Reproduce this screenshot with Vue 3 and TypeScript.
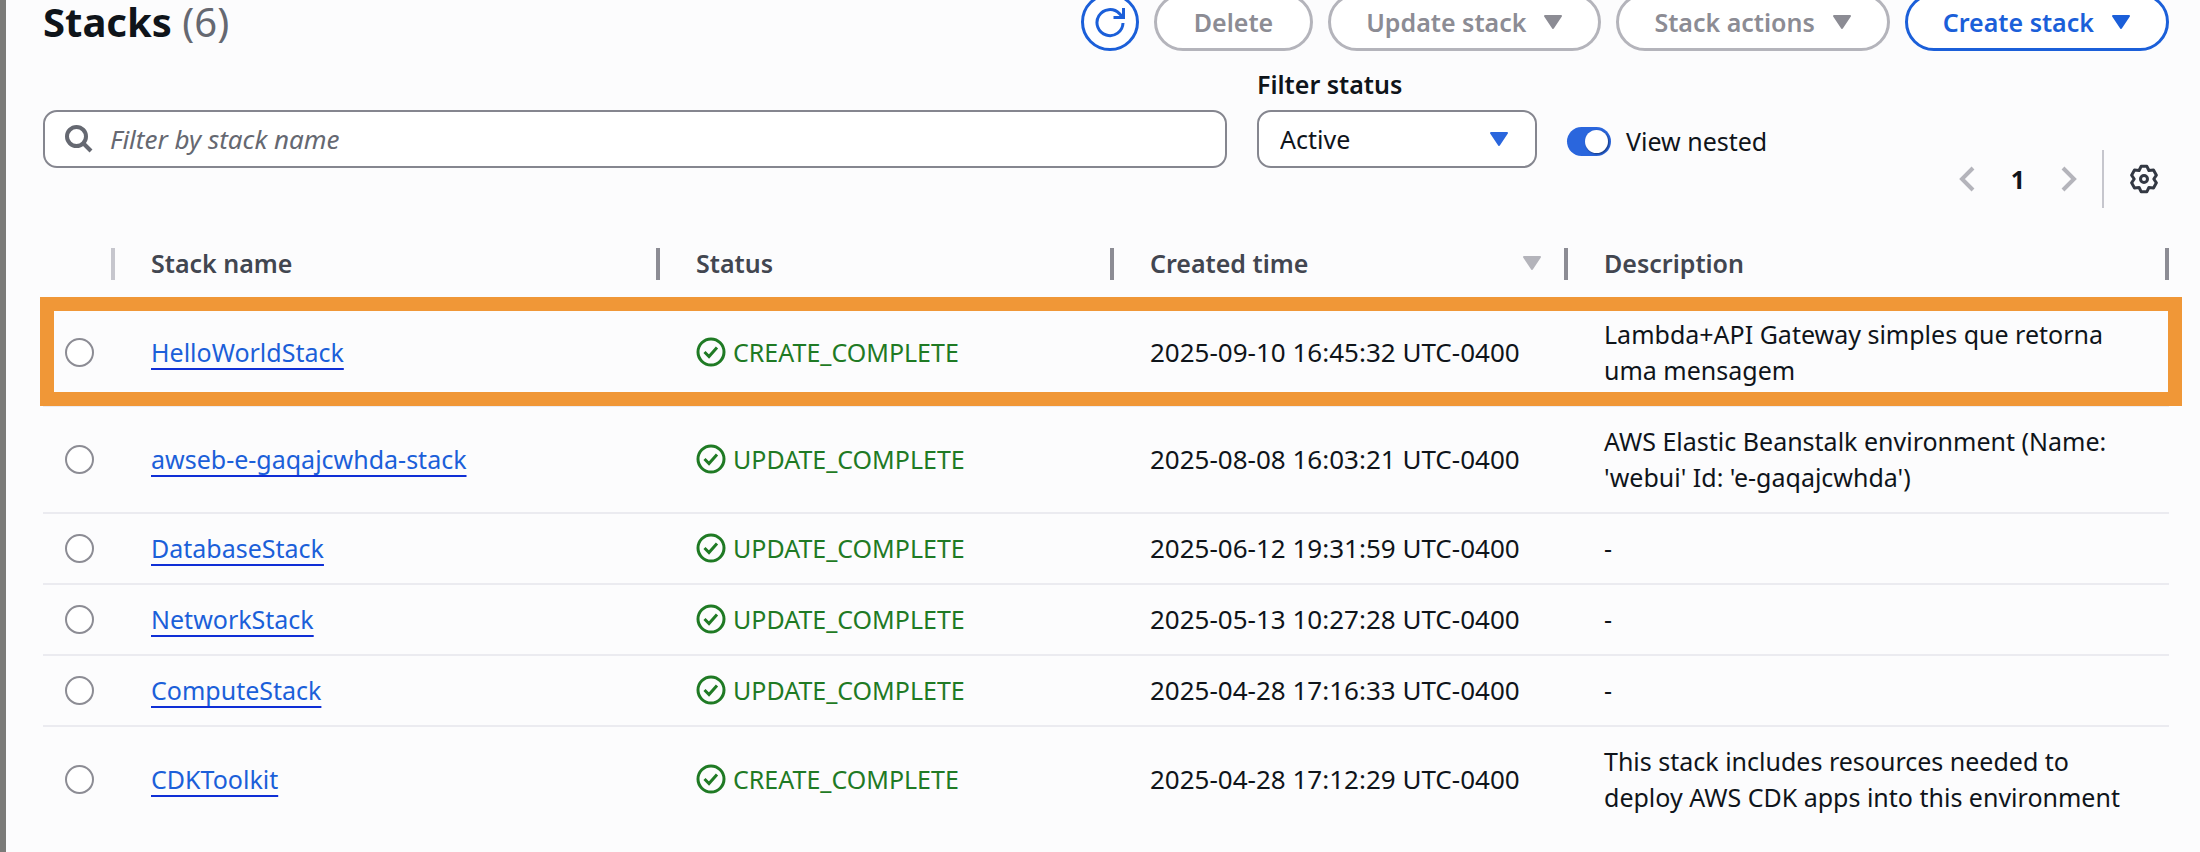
<script setup lang="ts">
import { ref } from 'vue'

interface Stack {
  name: string
  status: string
  created: string
  description: string
}

const stacks: Stack[] = [
  { name: 'HelloWorldStack', status: 'CREATE_COMPLETE', created: '2025-09-10 16:45:32 UTC-0400', description: 'Lambda+API Gateway simples que retorna uma mensagem' },
  { name: 'awseb-e-gaqajcwhda-stack', status: 'UPDATE_COMPLETE', created: '2025-08-08 16:03:21 UTC-0400', description: "AWS Elastic Beanstalk environment (Name: 'webui' Id: 'e-gaqajcwhda')" },
  { name: 'DatabaseStack', status: 'UPDATE_COMPLETE', created: '2025-06-12 19:31:59 UTC-0400', description: '-' },
  { name: 'NetworkStack', status: 'UPDATE_COMPLETE', created: '2025-05-13 10:27:28 UTC-0400', description: '-' },
  { name: 'ComputeStack', status: 'UPDATE_COMPLETE', created: '2025-04-28 17:16:33 UTC-0400', description: '-' },
  { name: 'CDKToolkit', status: 'CREATE_COMPLETE', created: '2025-04-28 17:12:29 UTC-0400', description: 'This stack includes resources needed to deploy AWS CDK apps into this environment' },
]

const highlighted = 'HelloWorldStack'
const selected = ref('')
const query = ref('')
const filterStatus = ref('Active')
const viewNested = ref(true)
</script>

<template>
  <main class="page">
    <header class="header">
      <h1 class="title">Stacks <span class="count">({{ stacks.length }})</span></h1>
      <div class="actions">
        <button type="button" class="btn round" aria-label="Refresh">
          <svg class="refresh" viewBox="0 0 32 32" aria-hidden="true">
            <path d="M29 17a13 13 0 1 1-3.6-9.4L28.500 11M29.500 2v9.500H19.500" />
          </svg>
        </button>
        <button type="button" class="btn" disabled>Delete</button>
        <button type="button" class="btn menu" disabled>Update stack
          <svg class="caret" viewBox="0 0 20 16" aria-hidden="true"><path d="M2 2h16l-8 12z" /></svg>
        </button>
        <button type="button" class="btn menu" disabled>Stack actions
          <svg class="caret" viewBox="0 0 20 16" aria-hidden="true"><path d="M2 2h16l-8 12z" /></svg>
        </button>
        <button type="button" class="btn menu">Create stack
          <svg class="caret" viewBox="0 0 20 16" aria-hidden="true"><path d="M2 2h16l-8 12z" /></svg>
        </button>
      </div>
    </header>

    <section class="tools">
      <div class="filters">
        <div class="search">
          <svg class="magnifier" viewBox="0 0 28 28" aria-hidden="true">
            <circle cx="11.500" cy="11.500" r="9.500" /><path d="M18 18l8 8" />
          </svg>
          <input v-model="query" class="field search-input" type="search" placeholder="Filter by stack name" aria-label="Filter by stack name" />
        </div>
        <div class="status-filter">
          <label class="label" for="filter-status">Filter status</label>
          <div class="select-wrap">
            <select id="filter-status" v-model="filterStatus" class="field select">
              <option>Active</option>
              <option>Deleted</option>
            </select>
            <svg class="caret select-caret" viewBox="0 0 20 16" aria-hidden="true"><path d="M2 2h16l-8 12z" /></svg>
          </div>
        </div>
        <label class="nested">
          <input v-model="viewNested" class="toggle" type="checkbox" role="switch" />
          <span>View nested</span>
        </label>
      </div>
      <nav class="pagination" aria-label="Pagination">
        <button type="button" class="plain" disabled aria-label="Previous page">
          <svg class="chevron" viewBox="0 0 16 26" aria-hidden="true"><path d="M14 2L3 13l11 11" /></svg>
        </button>
        <button type="button" class="plain current" aria-current="page">1</button>
        <button type="button" class="plain" disabled aria-label="Next page">
          <svg class="chevron" viewBox="0 0 16 26" aria-hidden="true"><path d="M2 2l11 11L2 24" /></svg>
        </button>
        <button type="button" class="plain preferences" aria-label="Preferences">
          <svg class="gear" viewBox="0 0 30 30" aria-hidden="true">
            <path d="M12.1 2.3H17.9L19.9 6.5L24.5 6.1L27.4 11.2L24.8 15L27.4 18.8L24.5 23.9L19.9 23.5L17.9 27.7H12.1L10.1 23.5L5.5 23.9L2.6 18.8L5.2 15L2.6 11.2L5.5 6.1L10.1 6.5Z" />
            <circle cx="15" cy="15" r="3.5" />
          </svg>
        </button>
      </nav>
    </section>

    <table class="table">
      <colgroup>
        <col class="col-select" /><col class="col-name" /><col class="col-mid" /><col class="col-mid" /><col />
      </colgroup>
      <thead>
        <tr>
          <th class="first" aria-label="Selection"></th>
          <th scope="col"><div class="th">Stack name</div></th>
          <th scope="col"><div class="th">Status</div></th>
          <th scope="col" aria-sort="descending">
            <div class="th">Created time
              <svg class="caret sort" viewBox="0 0 20 16" aria-hidden="true"><path d="M2 2h16l-8 12z" /></svg>
            </div>
          </th>
          <th scope="col"><div class="th">Description</div></th>
        </tr>
      </thead>
      <tbody>
        <tr v-for="s in stacks" :key="s.name" :class="{ highlight: s.name === highlighted }">
          <td class="pick"><input v-model="selected" class="radio" type="radio" name="stack" :value="s.name" :aria-label="s.name" /></td>
          <td><a class="link" href="#">{{ s.name }}</a></td>
          <td>
            <span class="status">
              <svg class="check" viewBox="0 0 30 30" aria-hidden="true"><circle cx="15" cy="15" r="13" /><path d="M8.500 15l4.500 4.500 8-9" /></svg>
              {{ s.status }}
            </span>
          </td>
          <td class="date">{{ s.created }}</td>
          <td>{{ s.description }}</td>
        </tr>
      </tbody>
    </table>
  </main>
</template>

<style>
body {
  margin: 0;
  background: #fcfcfd;
}
</style>

<style scoped>
.page {
  box-sizing: border-box;
  min-height: 100vh;
  overflow: hidden;
  padding: 0 31px 0 37px;
  border-left: 6px solid #7b7b79;
  background: #fcfcfd;
  color: #0f141a;
  font-family: "Noto Sans", "Open Sans", sans-serif;
  font-size: 25px;
  line-height: 36px;
}
button,
input,
select {
  font: inherit;
  color: inherit;
}
svg {
  display: block;
  flex: none;
  fill: none;
  stroke: currentColor;
}
.header {
  display: flex;
  align-items: center;
  justify-content: space-between;
  margin-top: -7px;
}
.title {
  margin: 0;
  font-size: 40px;
  line-height: 40px;
  font-weight: 700;
}
.count {
  font-weight: 400;
  color: #656871;
}
.actions {
  display: flex;
  gap: 15px;
}
.btn {
  box-sizing: border-box;
  display: flex;
  align-items: center;
  height: 58px;
  padding: 0 37px;
  border: 3px solid #1b5fd9;
  border-radius: 29px;
  background: #fff;
  color: #1b5fd9;
  font-weight: 600;
  white-space: nowrap;
}
.btn:disabled {
  border-color: #b4b4bb;
  color: #8c8c94;
}
.menu {
  gap: 17px;
  padding: 0 35px;
}
.round {
  justify-content: center;
  width: 58px;
  padding: 0;
}
.refresh {
  width: 32px;
  height: 32px;
  stroke-width: 3;
}
.caret {
  width: 20px;
  height: 16px;
  fill: currentColor;
  stroke-width: 2;
  stroke-linejoin: round;
}
.tools {
  display: flex;
  align-items: flex-end;
  justify-content: space-between;
  padding-top: 15px;
}
.filters {
  flex: 1;
  display: grid;
  grid-template-columns: 1fr 280px 392px;
  align-items: end;
  column-gap: 30px;
  padding-bottom: 40px;
}
.search,
.select-wrap {
  position: relative;
}
.field {
  display: block;
  box-sizing: border-box;
  width: 100%;
  height: 58px;
  margin: 0;
  border: 2px solid #85868f;
  border-radius: 14px;
  background: #fff;
  appearance: none;
  outline: none;
}
.search-input {
  padding: 0 20px 0 65px;
  font-size: 26px;
}
.search-input::placeholder {
  color: #656871;
  font-style: italic;
  opacity: 1;
}
.magnifier {
  position: absolute;
  left: 22px;
  top: 15px;
  width: 28px;
  height: 28px;
  color: #656871;
  stroke-width: 4;
}
.label {
  display: block;
  margin-bottom: 8px;
  font-weight: 600;
}
.select {
  padding: 0 60px 0 21px;
}
.select-caret {
  position: absolute;
  right: 28px;
  top: 21px;
  color: #2a66dd;
  pointer-events: none;
}
.nested {
  display: flex;
  align-items: center;
  gap: 15px;
  margin-bottom: 9px;
}
.toggle {
  display: flex;
  align-items: center;
  justify-content: flex-end;
  box-sizing: border-box;
  width: 44px;
  height: 29px;
  margin: 0;
  padding: 3px;
  border-radius: 15px;
  background: #2a66dd;
  appearance: none;
}
.toggle:not(:checked) {
  justify-content: flex-start;
  background: #656871;
}
.toggle::after {
  content: "";
  width: 23px;
  height: 23px;
  border-radius: 50%;
  background: #fff;
  box-shadow: 1px 1px 2px rgb(0 7 22 / 50%);
}
.pagination {
  display: flex;
  align-items: center;
  height: 58px;
}
.plain {
  display: flex;
  align-items: center;
  justify-content: center;
  height: 58px;
  padding: 0;
  border: 0;
  background: none;
}
.plain:disabled {
  color: #b4b4bb;
}
.current {
  width: 86px;
  font-weight: 700;
}
.chevron {
  width: 16px;
  height: 26px;
  stroke-width: 4;
}
.preferences {
  margin-left: 25px;
  padding: 0 10px 0 25px;
  border-left: 2px solid #c6c6cd;
  color: #333843;
}
.gear {
  width: 30px;
  height: 30px;
  stroke-width: 3;
  stroke-linejoin: round;
}
.table {
  width: 100%;
  border-collapse: separate;
  border-spacing: 0;
  table-layout: fixed;
}
.col-select {
  width: 72px;
}
.col-name {
  width: 545px;
}
.col-mid {
  width: 454px;
}
th {
  padding: 37px 0 19px 36px;
  background: linear-gradient(#8c8c94, #8c8c94) right 0 top 40px / 4px 32px no-repeat;
  color: #424650;
  font-weight: 600;
  text-align: left;
}
.first {
  background-image: linear-gradient(#c6c6cd, #c6c6cd);
}
.th {
  display: flex;
  align-items: center;
  justify-content: space-between;
  height: 36px;
  padding-right: 26px;
}
.sort {
  color: #b4b4bb;
}
td {
  padding: 16px 31px 17px 36px;
  border-bottom: 2px solid #ebebf0;
}
tbody tr:last-child td {
  border-bottom-color: transparent;
}
.pick {
  padding-left: 22px;
  padding-right: 0;
}
.radio {
  display: block;
  box-sizing: border-box;
  width: 29px;
  height: 29px;
  margin: 0;
  border: 2px solid #8c8c94;
  border-radius: 50%;
  background: #fff;
  appearance: none;
}
.radio:checked {
  border: 9px solid #1b5fd9;
}
.link {
  color: #1b5fd9;
  text-decoration: underline;
  text-decoration-color: #0f2fd6;
  text-decoration-thickness: 2px;
  text-underline-offset: 6px;
  text-decoration-skip-ink: none;
}
.status {
  display: flex;
  align-items: center;
  gap: 7px;
  color: #1f7a24;
}
.check {
  width: 30px;
  height: 30px;
  stroke-width: 3;
}
.date {
  padding-right: 0;
  font-size: 26px;
  white-space: nowrap;
}
.highlight {
  position: relative;
}
.highlight .pick::after {
  content: "";
  position: absolute;
  inset: -3px -13px 1px -3px;
  border: 14px solid #f09737;
  pointer-events: none;
}
</style>
